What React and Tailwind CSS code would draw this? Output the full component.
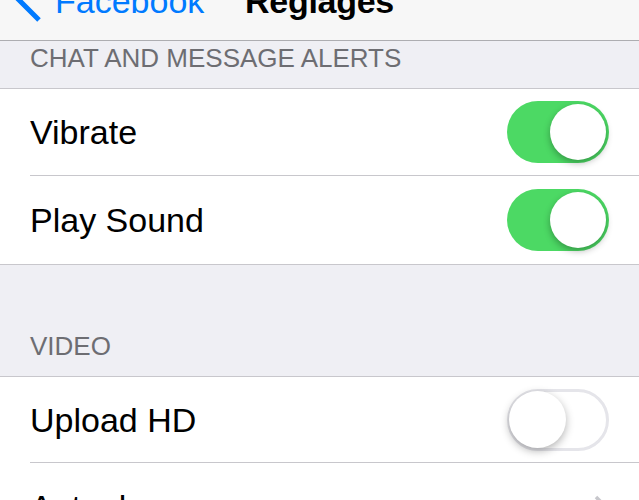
import React from "react";

function Toggle({ on }) {
  if (on) {
    return (
      <div className="w-[102px] h-[62px] rounded-full bg-[#4cd964] p-[3px] flex justify-end shrink-0">
        <div className="w-[56px] h-[56px] rounded-full bg-white shadow-[0_3px_7px_rgba(0,0,0,0.3)]" />
      </div>
    );
  }
  return (
    <div className="w-[102px] h-[62px] rounded-full border-[3px] border-[#e5e5ea] bg-white flex justify-start shrink-0">
      <div className="w-[57px] h-[57px] -ml-[1px] -mt-[1px] rounded-full bg-white shadow-[0_3px_8px_rgba(0,0,0,0.3)]" />
    </div>
  );
}

function SectionHeader({ title, height }) {
  return (
    <div className={`flex items-end px-[30px] pb-[17px] ${height}`}>
      <span className="text-[26px] leading-none text-[#6d6d72]">{title}</span>
    </div>
  );
}

function Row({ label, children, separator, height }) {
  return (
    <div className={`pl-[30px] bg-white ${height}`}>
      <div
        className={`h-full flex items-center justify-between pr-[30px] ${
          separator ? "border-b border-[#c8c7cc]" : ""
        }`}
      >
        <span className="text-[34px] leading-none text-black">{label}</span>
        {children}
      </div>
    </div>
  );
}

export default function App() {
  return (
    <div className="w-[639px] h-[500px] overflow-hidden bg-[#efeff4] font-['Liberation_Sans',Arial,sans-serif]">
      {/* nav bar, scrolled so its top is cut off */}
      <div className="h-[41px] bg-[#f7f7f7] border-b border-[#adadb1] overflow-hidden">
        <div className="grid grid-cols-[1fr_auto_1fr] items-end -mt-[22px] h-[34px]">
          <div className="flex items-end text-[#007aff]">
            <svg width="28" height="46" viewBox="0 0 28 46" className="ml-[14px] -mb-[6px] shrink-0">
              <path d="M25 2 L5 22 L25 42" fill="none" stroke="#007aff" strokeWidth="5" />
            </svg>
            <span className="text-[34px] leading-none ml-[13px]">Facebook</span>
          </div>
          <span className="text-[34px] leading-none font-bold text-black tracking-[-0.3px]">Réglages</span>
          <div />
        </div>
      </div>

      <SectionHeader title="CHAT AND MESSAGE ALERTS" height="h-[47px]" />
      <div className="border-y border-[#c8c7cc]">
        <Row label="Vibrate" separator height="h-[87px]">
          <Toggle on />
        </Row>
        <Row label="Play Sound" height="h-[88px]">
          <Toggle on />
        </Row>
      </div>

      <SectionHeader title="VIDEO" height="h-[111px]" />
      <div className="border-t border-[#c8c7cc]">
        <Row label="Upload HD" separator height="h-[86px]">
          <Toggle on={false} />
        </Row>
        <Row label="Autoplay" height="h-[88px]">
          <svg width="16" height="26" viewBox="0 0 16 26" className="shrink-0">
            <path d="M3 3 L13 13 L3 23" fill="none" stroke="#c7c7cc" strokeWidth="3.5" />
          </svg>
        </Row>
      </div>
    </div>
  );
}
